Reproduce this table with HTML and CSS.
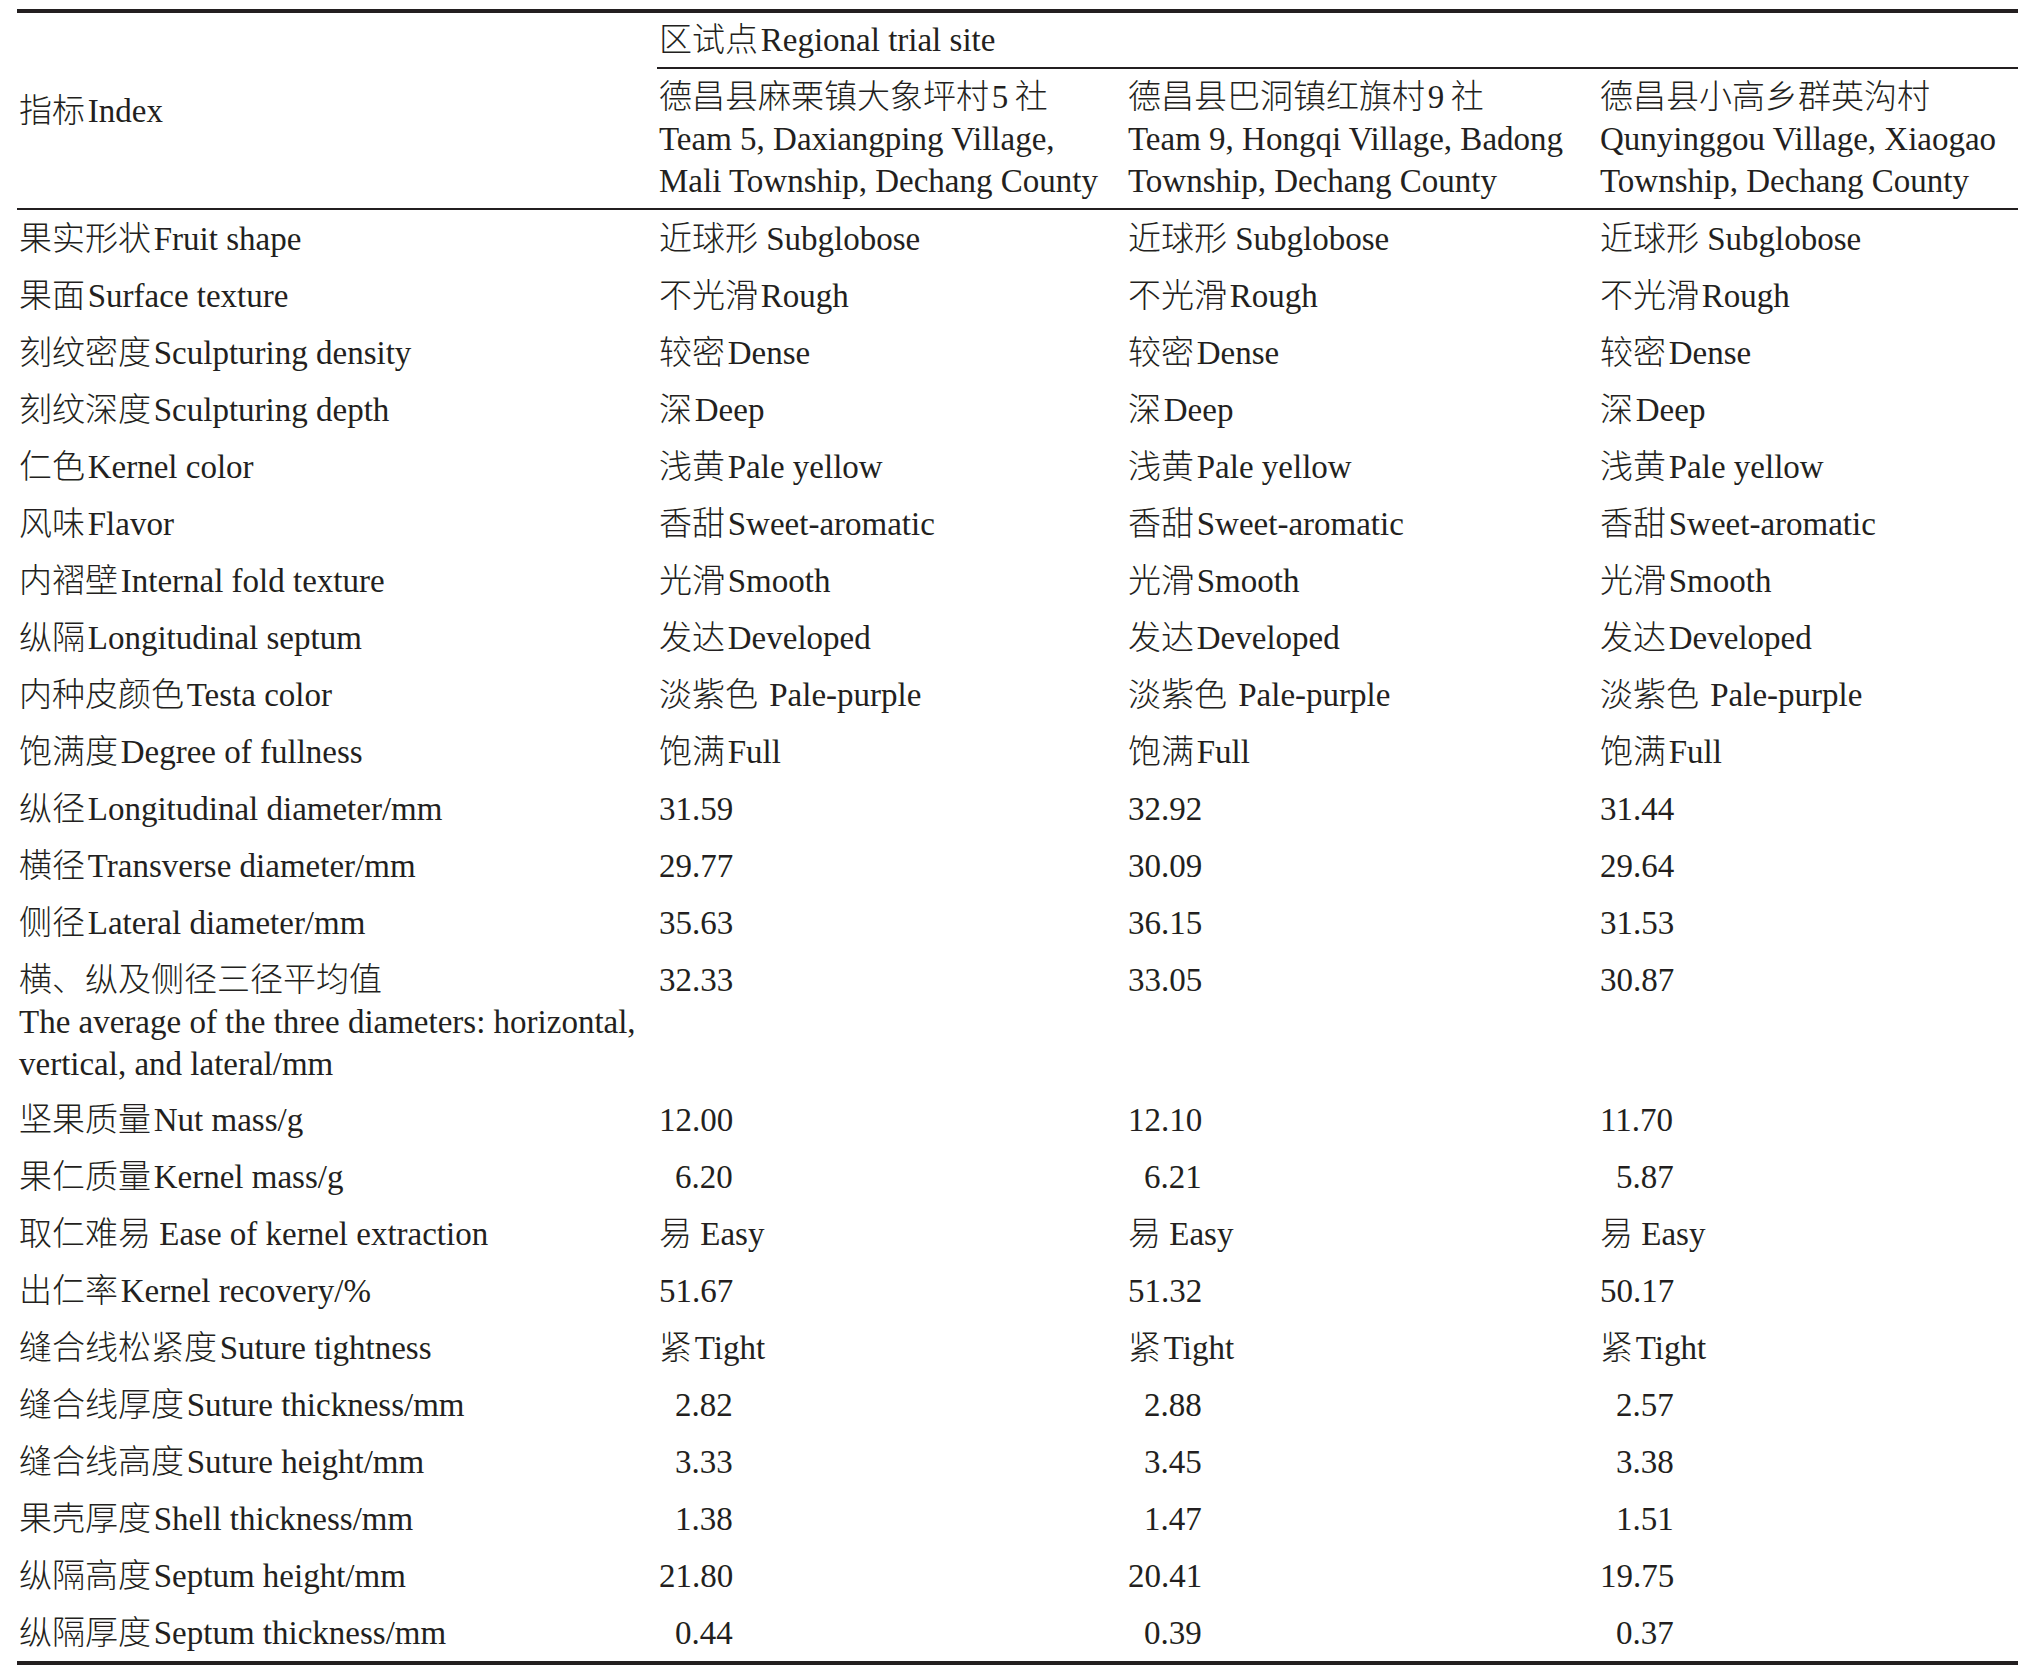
FILE: index.html
```html
<!DOCTYPE html>
<html lang="zh-CN">
<head>
<meta charset="utf-8">
<title>区试点 Regional trial site</title>
<link rel="stylesheet" href="styles.css">
</head>
<body>
<div class="page">
<table class="data">
  <colgroup>
    <col class="c-index">
    <col class="c-site1">
    <col class="c-site2">
    <col class="c-site3">
  </colgroup>
  <thead>
    <tr class="h1">
      <th class="idx" rowspan="2">指标&#8202;Index</th>
      <th class="group" colspan="3">区试点&#8202;Regional trial site</th>
    </tr>
    <tr class="h2">
      <th>德昌县麻栗镇大象坪村&#8202;5&#8201;社<br>Team 5, Daxiangping Village,<br>Mali Township, Dechang County</th>
      <th>德昌县巴洞镇红旗村&#8202;9&#8201;社<br>Team 9, Hongqi Village, Badong<br>Township, Dechang County</th>
      <th>德昌县小高乡群英沟村<br>Qunyinggou Village, Xiaogao<br>Township, Dechang County</th>
    </tr>
  </thead>
  <tbody>
    <tr><td>果实形状&#8202;Fruit shape</td><td>近球形 Subglobose</td><td>近球形 Subglobose</td><td>近球形 Subglobose</td></tr>
    <tr><td>果面&#8202;Surface texture</td><td>不光滑&#8202;Rough</td><td>不光滑&#8202;Rough</td><td>不光滑&#8202;Rough</td></tr>
    <tr><td>刻纹密度&#8202;Sculpturing density</td><td>较密&#8202;Dense</td><td>较密&#8202;Dense</td><td>较密&#8202;Dense</td></tr>
    <tr><td>刻纹深度&#8202;Sculpturing depth</td><td>深&#8202;Deep</td><td>深&#8202;Deep</td><td>深&#8202;Deep</td></tr>
    <tr><td>仁色&#8202;Kernel color</td><td>浅黄&#8202;Pale yellow</td><td>浅黄&#8202;Pale yellow</td><td>浅黄&#8202;Pale yellow</td></tr>
    <tr><td>风味&#8202;Flavor</td><td>香甜&#8202;Sweet-aromatic</td><td>香甜&#8202;Sweet-aromatic</td><td>香甜&#8202;Sweet-aromatic</td></tr>
    <tr><td>内褶壁&#8202;Internal fold texture</td><td>光滑&#8202;Smooth</td><td>光滑&#8202;Smooth</td><td>光滑&#8202;Smooth</td></tr>
    <tr><td>纵隔&#8202;Longitudinal septum</td><td>发达&#8202;Developed</td><td>发达&#8202;Developed</td><td>发达&#8202;Developed</td></tr>
    <tr><td>内种皮颜色&#8202;Testa color</td><td>淡紫色 <span class="wide">Pale-purple</span></td><td>淡紫色 <span class="wide">Pale-purple</span></td><td>淡紫色 <span class="wide">Pale-purple</span></td></tr>
    <tr><td>饱满度&#8202;Degree of fullness</td><td>饱满&#8202;Full</td><td>饱满&#8202;Full</td><td>饱满&#8202;Full</td></tr>
    <tr><td>纵径&#8202;Longitudinal diameter/mm</td><td>31.59</td><td>32.92</td><td>31.44</td></tr>
    <tr><td>横径&#8202;Transverse diameter/mm</td><td>29.77</td><td>30.09</td><td>29.64</td></tr>
    <tr><td>侧径&#8202;Lateral diameter/mm</td><td>35.63</td><td>36.15</td><td>31.53</td></tr>
    <tr class="multi"><td>横、纵及侧径三径平均值<br>The average of the three diameters: horizontal,<br>vertical, and lateral/mm</td><td>32.33</td><td>33.05</td><td>30.87</td></tr>
    <tr><td>坚果质量&#8202;Nut mass/g</td><td>12.00</td><td>12.10</td><td>11.70</td></tr>
    <tr><td>果仁质量&#8202;Kernel mass/g</td><td class="pad">6.20</td><td class="pad">6.21</td><td class="pad">5.87</td></tr>
    <tr><td>取仁难易 Ease of kernel extraction</td><td>易 Easy</td><td>易 Easy</td><td>易 Easy</td></tr>
    <tr><td>出仁率&#8202;Kernel recovery/%</td><td>51.67</td><td>51.32</td><td>50.17</td></tr>
    <tr><td>缝合线松紧度&#8202;Suture tightness</td><td>紧&#8202;Tight</td><td>紧&#8202;Tight</td><td>紧&#8202;Tight</td></tr>
    <tr><td>缝合线厚度&#8202;Suture thickness/mm</td><td class="pad">2.82</td><td class="pad">2.88</td><td class="pad">2.57</td></tr>
    <tr><td>缝合线高度&#8202;Suture height/mm</td><td class="pad">3.33</td><td class="pad">3.45</td><td class="pad">3.38</td></tr>
    <tr><td>果壳厚度&#8202;Shell thickness/mm</td><td class="pad">1.38</td><td class="pad">1.47</td><td class="pad">1.51</td></tr>
    <tr><td>纵隔高度&#8202;Septum height/mm</td><td>21.80</td><td>20.41</td><td>19.75</td></tr>
    <tr><td>纵隔厚度&#8202;Septum thickness/mm</td><td class="pad">0.44</td><td class="pad">0.39</td><td class="pad">0.37</td></tr>
  </tbody>
</table>
</div>
</body>
</html>
```

FILE: styles.css
```css
html, body {
  margin: 0;
  padding: 0;
  background: #ffffff;
}

.page {
  padding: 9px 9px 0 17px;
}

.data {
  width: 2001px;
  table-layout: fixed;
  border-collapse: collapse;
  border-spacing: 0;
  font-family: "Liberation Serif", "Noto Sans CJK SC", serif;
  font-size: 33px;
  font-weight: 300;
  color: #231f20;
  border-top: 4px solid #231f20;
  border-bottom: 4px solid #231f20;
}

.c-index { width: 640px; }
.c-site1 { width: 469px; }
.c-site2 { width: 472px; }
.c-site3 { width: 420px; }

.data th,
.data td {
  font-weight: 300;
  text-align: left;
  white-space: nowrap;
  padding: 8px 0 7px 2px;
  line-height: 42px;
  vertical-align: top;
}

.h1 .group {
  line-height: 41px;
  padding-top: 7px;
  padding-bottom: 6px;
  border-bottom: 2px solid #231f20;
}

.h1 .idx {
  vertical-align: middle;
  border-bottom: 2px solid #231f20;
  padding-top: 0;
  padding-bottom: 0;
}

.h2 th {
  line-height: 42px;
  padding-top: 7px;
  padding-bottom: 6px;
  border-bottom: 2px solid #231f20;
}

.data .multi td {
  padding-bottom: 6px;
}

.data td.pad {
  padding-left: 18px;
}

.wide {
  margin-left: 3px;
}
```
